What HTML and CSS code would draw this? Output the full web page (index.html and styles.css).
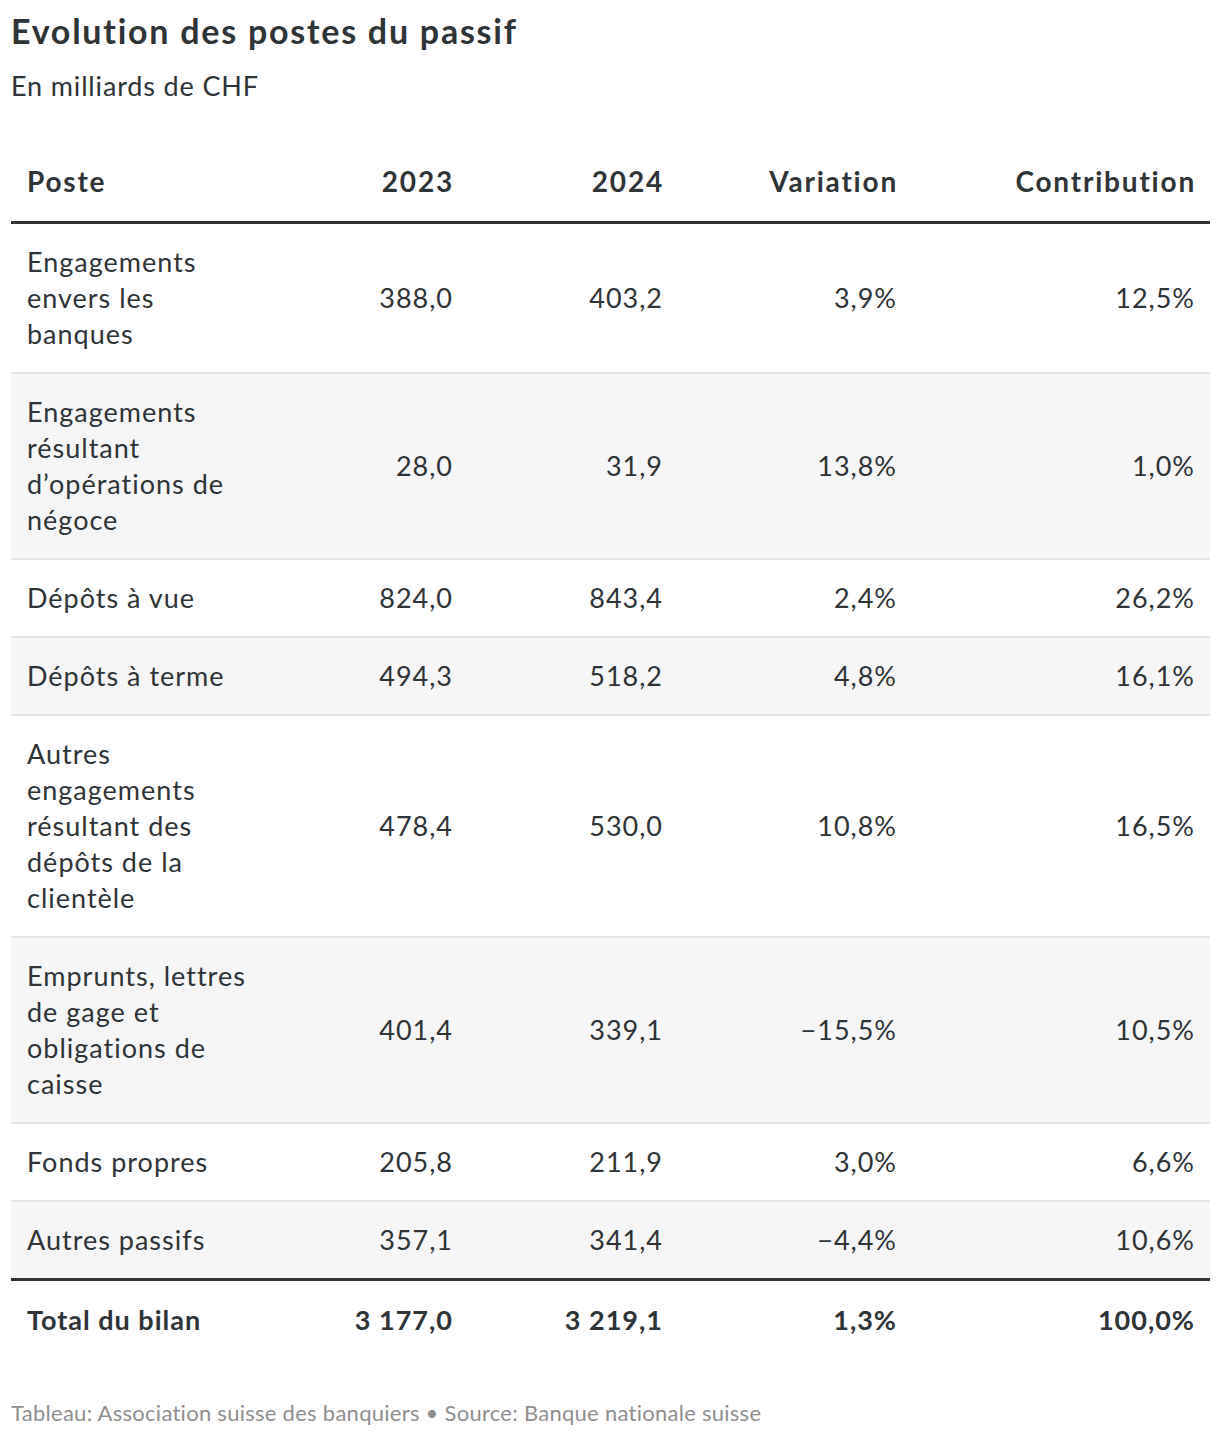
FILE: index.html
```html
<!DOCTYPE html>
<html lang="fr">
<head>
<meta charset="utf-8">
<title>Evolution des postes du passif</title>
<link rel="stylesheet" href="styles.css">
</head>
<body>
<div class="chart">
  <h1 class="title">Evolution des postes du passif</h1>
  <p class="subtitle">En milliards de CHF</p>
  <table class="tbl">
    <colgroup>
      <col class="c1"><col class="c2"><col class="c3"><col class="c4"><col class="c5">
    </colgroup>
    <thead>
      <tr><th class="l">Poste</th><th>2023</th><th>2024</th><th>Variation</th><th>Contribution</th></tr>
    </thead>
    <tbody>
      <tr><td class="l">Engagements envers les banques</td><td>388,0</td><td>403,2</td><td>3,9%</td><td>12,5%</td></tr>
      <tr class="alt"><td class="l">Engagements résultant d’opérations de négoce</td><td>28,0</td><td>31,9</td><td>13,8%</td><td>1,0%</td></tr>
      <tr><td class="l">Dépôts à vue</td><td>824,0</td><td>843,4</td><td>2,4%</td><td>26,2%</td></tr>
      <tr class="alt"><td class="l">Dépôts à terme</td><td>494,3</td><td>518,2</td><td>4,8%</td><td>16,1%</td></tr>
      <tr><td class="l">Autres engagements résultant des dépôts de la clientèle</td><td>478,4</td><td>530,0</td><td>10,8%</td><td>16,5%</td></tr>
      <tr class="alt"><td class="l">Emprunts, lettres de gage et obligations de caisse</td><td>401,4</td><td>339,1</td><td>−15,5%</td><td>10,5%</td></tr>
      <tr><td class="l">Fonds propres</td><td>205,8</td><td>211,9</td><td>3,0%</td><td>6,6%</td></tr>
      <tr class="alt last"><td class="l">Autres passifs</td><td>357,1</td><td>341,4</td><td>−4,4%</td><td>10,6%</td></tr>
    </tbody>
    <tfoot>
      <tr><td class="l">Total du bilan</td><td>3 177,0</td><td>3 219,1</td><td>1,3%</td><td>100,0%</td></tr>
    </tfoot>
  </table>
  <p class="footer">Tableau: Association suisse des banquiers • Source: Banque nationale suisse</p>
</div>
</body>
</html>
```
FILE: styles.css
```css
html, body {
  margin: 0;
  padding: 0;
  background: #ffffff;
}
body {
  font-family: "Lato", "Noto Sans", sans-serif;
  color: #2f3437;
}
.chart {
  padding: 9px 10px 0 11px;
}
.title {
  margin: 0;
  font-size: 34px;
  line-height: 44px;
  font-weight: 700;
  letter-spacing: 1.75px;
  color: #2f3437;
}
.subtitle {
  margin: 15px 0 0 0;
  font-size: 27px;
  line-height: 36px;
  font-weight: 400;
  letter-spacing: 0.85px;
  color: #2f3437;
}
.tbl {
  margin-top: 39px;
  width: 1199px;
  border-collapse: collapse;
  table-layout: fixed;
  font-size: 27px;
  line-height: 36px;
  letter-spacing: 1px;
}
.c1 { width: 250px; }
.c2 { width: 207px; }
.c3 { width: 210px; }
.c4 { width: 234px; }
.c5 { width: 298px; }
.tbl th, .tbl td {
  padding: 20px 15px 20px 16px;
  text-align: right;
  vertical-align: middle;
  font-variant-numeric: tabular-nums;
}
.tbl th.l, .tbl td.l {
  text-align: left;
  padding-right: 8px;
}
.tbl thead th {
  font-size: 28px;
  font-weight: 700;
  letter-spacing: 1.8px;
  padding-right: 14px;
  padding-bottom: 22px;
  border-bottom: 3px solid #333333;
}
.tbl tbody tr {
  border-bottom: 2px solid #e5e5e5;
}
.tbl tbody tr.alt {
  background: #f6f6f6;
}
.tbl tbody tr.last {
  border-bottom: 3px solid #333333;
}
.tbl tfoot td {
  font-weight: 700;
  padding-top: 21px;
}
.footer {
  margin: 41px 0 0 0;
  font-size: 22px;
  line-height: 28px;
  letter-spacing: 0.27px;
  color: #8f8f8f;
}
```
